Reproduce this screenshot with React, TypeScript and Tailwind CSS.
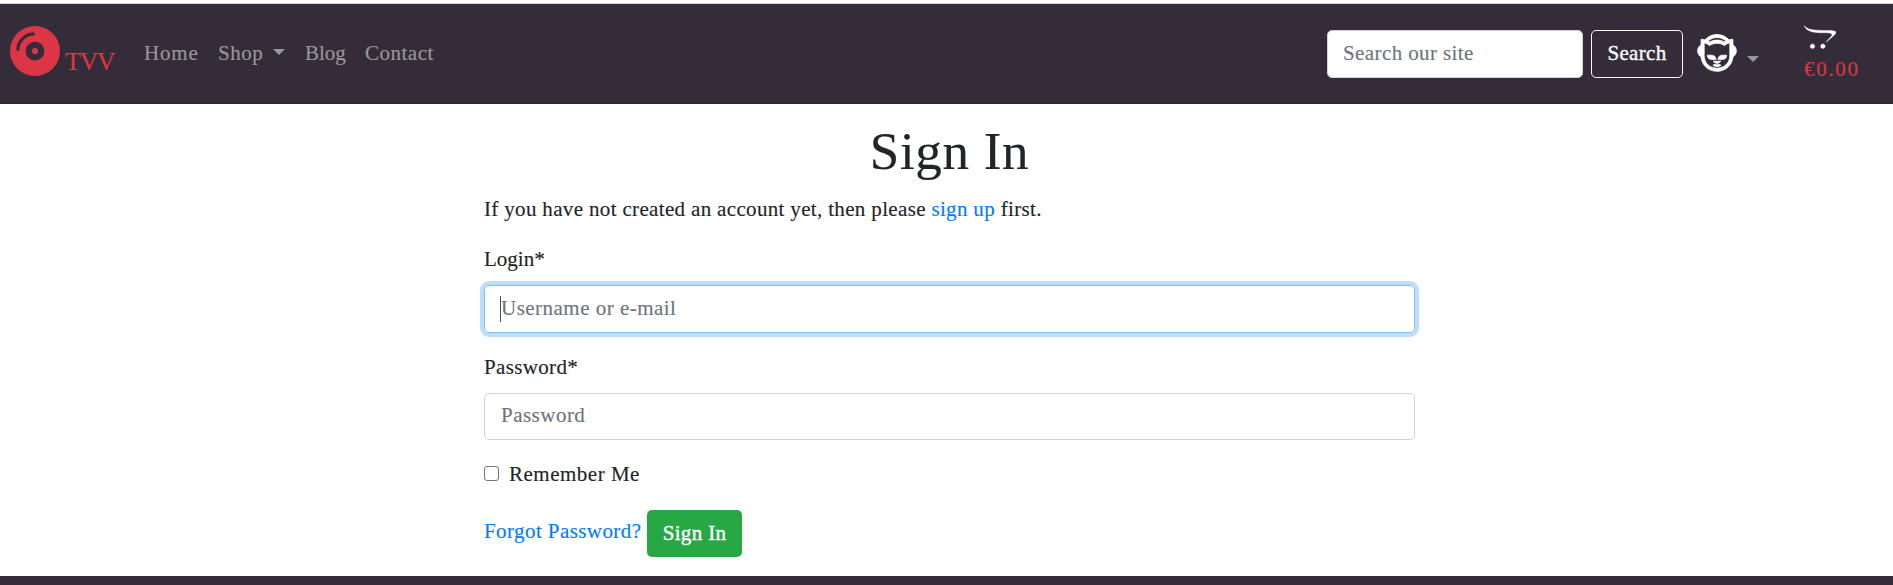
import { FaCompactDisc, FaNapster, FaOpencart } from "react-icons/fa6";

function Caret({ className = "" }: { className?: string }) {
  return (
    <span
      className={`inline-block h-0 w-0 border-x-[6px] border-t-[6px] border-x-transparent border-t-[#99969b] ${className}`}
    />
  );
}

function Navbar() {
  return (
    <nav className="flex h-[100px] shrink-0 border-b border-[#29232e] bg-[#342d39] pl-2.5 text-[#99969b]">
      <a href="#" className="flex w-[134px] text-[#dc3545]">
        <FaCompactDisc className="mt-[22px] h-[50px] w-[50px]" />
        <span className="ml-[5px] mt-[39px] text-[26px] leading-[38px] -tracking-[1.4px]">TVV</span>
      </a>
      <div className="mt-[34px] flex h-[30px] grow leading-[30px]">
        <a href="#" className="w-[74px] tracking-[0.8px]">Home</a>
        <a href="#" className="flex w-[87px] tracking-[0.5px]">
          Shop
          <Caret className="ml-2.5 mt-[11px]" />
        </a>
        <a href="#" className="w-[60px]">Blog</a>
        <a href="#" className="tracking-[0.5px]">Contact</a>
      </div>
      <form className="mt-[26px] flex gap-2">
        <input
          type="text"
          placeholder="Search our site"
          className="h-12 w-64 rounded-[5px] border border-[#ced4da] bg-white px-[15px] pb-0.5 tracking-[0.4px] placeholder:text-[#6c757d]"
        />
        <button
          type="button"
          className="h-12 w-[92px] rounded-[5px] border border-[#f8f9fa] tracking-[0.35px] text-[#f8f9fa] [-webkit-text-stroke:0.4px]"
        >
          Search
        </button>
      </form>
      <a href="#" className="flex w-[121px] pl-3.5">
        <FaNapster className="mt-7 h-10 w-10 stroke-white stroke-[10] text-white" />
        <Caret className="ml-2.5 mt-[52px]" />
      </a>
      <a href="#" className="flex w-[89px] flex-col text-[#dc3545]">
        <FaOpencart className="mt-[18px] h-[30px] w-8 stroke-white stroke-[8] text-white" />
        <span className="mt-0.5 leading-[30px] tracking-[1.7px]">€0.00</span>
      </a>
    </nav>
  );
}

export default function App() {
  return (
    <div className="flex h-[585px] flex-col overflow-hidden bg-white font-['Liberation_Serif',serif] text-[21px] text-[#212529] [-webkit-text-stroke:0.15px]">
      <div className="h-1 shrink-0 border-b border-[#d5d3d6]" />
      <Navbar />
      <main className="ml-[484px] flex w-[931px] grow flex-col tracking-[0.34px]">
        <h1 className="mt-[17px] text-center text-[53px] leading-[60px] tracking-[0.7px]">Sign In</h1>
        <p className="mt-[13px] leading-[30px]">
          If you have not created an account yet, then please{" "}
          <a href="#" className="text-[#007bff]">sign up</a> first.
        </p>
        <label className="mt-5 leading-[30px] tracking-normal">Login*</label>
        <div className="mt-[11px] flex h-12 shrink-0 items-center rounded-[5px] border border-[#80bdff] px-[15px] tracking-[0.48px] text-[#6c757d] shadow-[0_0_0_4px_#bfdeff]">
          <span className="h-[26px] w-px bg-[#495057]" />
          Username or e-mail
        </div>
        <label className="mt-[19px] leading-[30px]">Password*</label>
        <input
          type="password"
          placeholder="Password"
          className="mt-[11px] h-[47px] shrink-0 rounded-[5px] border border-[#ced4da] px-4 pb-[3px] tracking-[0.48px] placeholder:text-[#6c757d]"
        />
        <label className="mt-5 flex h-[30px] items-center tracking-[0.5px]">
          <span className="mb-[3px] mr-2.5 h-[15px] w-[15px] rounded-[3px] border border-[#767676]" />
          Remember Me
        </label>
        <div className="mt-5 flex">
          <a href="#" className="w-[163px] leading-[42px] tracking-[0.42px] text-[#007bff]">Forgot Password?</a>
          <button
            type="button"
            className="h-[47px] w-[95px] rounded-[5px] bg-[#28a745] text-white [-webkit-text-stroke:0.4px]"
          >
            Sign In
          </button>
        </div>
      </main>
      <footer className="h-[9px] shrink-0 bg-[#342d39]" />
    </div>
  );
}
